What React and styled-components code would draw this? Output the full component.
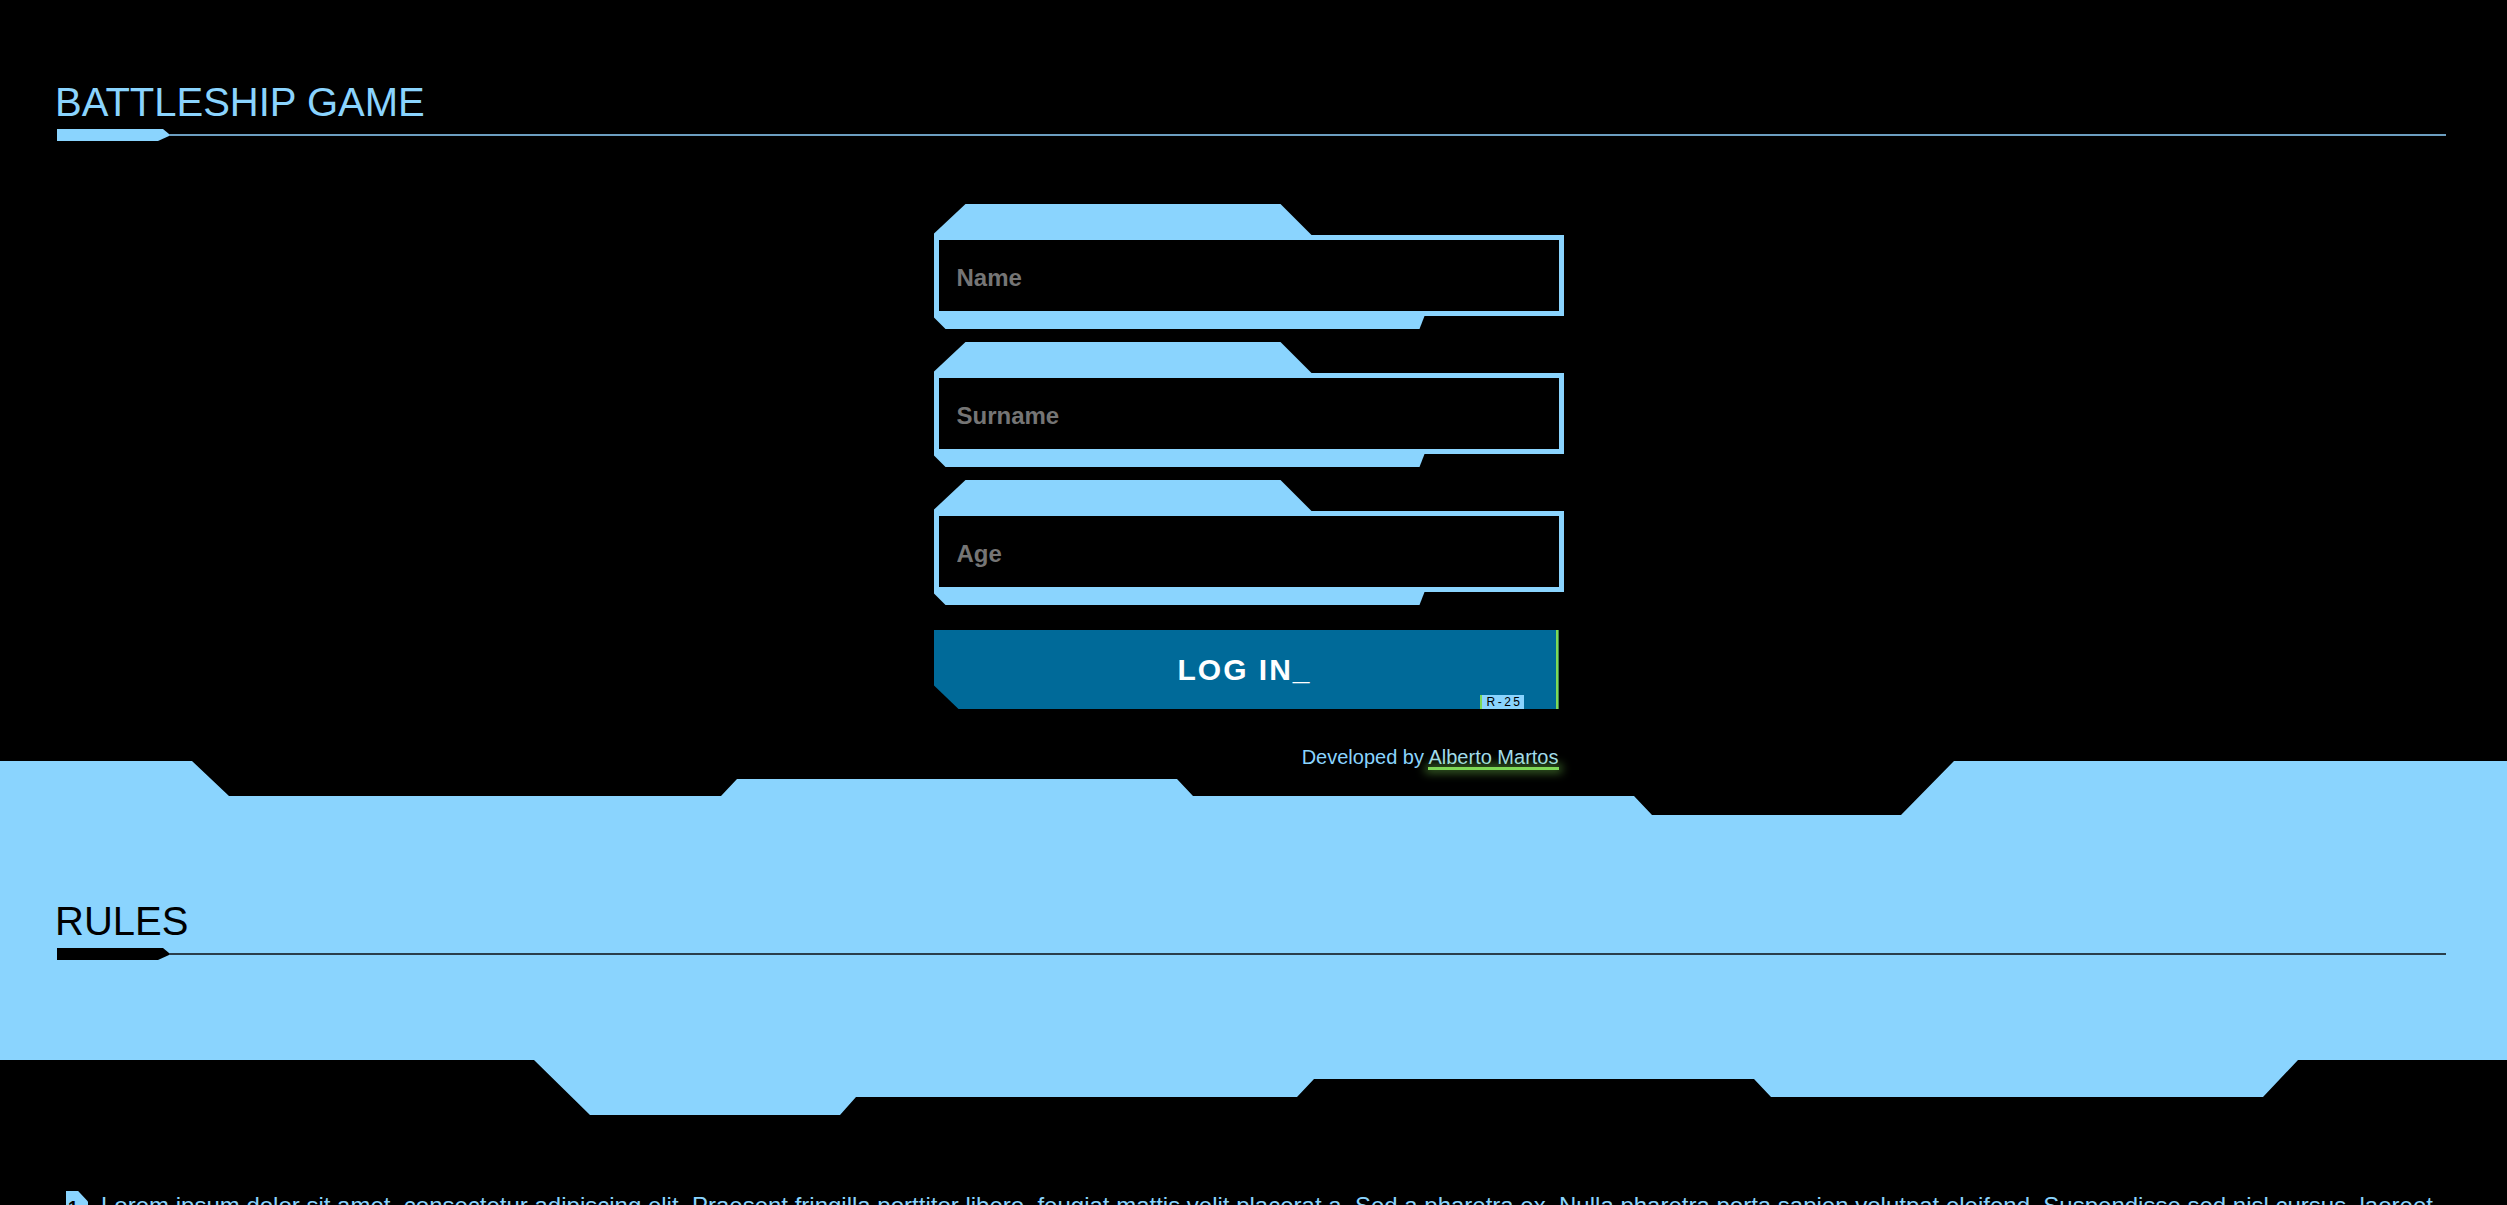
import React from 'react'
import styled, { createGlobalStyle } from 'styled-components'

const sky = '#8ad4fe'
const lime = '#7ed957'

const GlobalStyle = createGlobalStyle`
  html, body {
    margin: 0;
    padding: 0;
    background: #000;
  }
  body {
    font-family: "Liberation Sans", Arial, sans-serif;
    overflow: hidden;
  }
`

function Heading({ children, dark }) {
  return (
    <HeadingWrap>
      <Title dark={dark}>{children}</Title>
      <RuleRow>
        <RuleTab dark={dark} />
        <RuleLine dark={dark} />
      </RuleRow>
    </HeadingWrap>
  )
}

function Field({ placeholder }) {
  return (
    <FieldWrap>
      <TopTab />
      <Input placeholder={placeholder} />
      <BottomTab />
    </FieldWrap>
  )
}

export default function App() {
  return (
    <Page>
      <GlobalStyle />
      <Header>
        <Heading>BATTLESHIP GAME</Heading>
      </Header>

      <FormArea>
        <Form onSubmit={(e) => e.preventDefault()}>
          <Field placeholder="Name" />
          <Field placeholder="Surname" />
          <Field placeholder="Age" />
          <LoginButton type="submit">
            LOG IN_
            <Tag>R-25</Tag>
          </LoginButton>
          <Credit>
            Developed by <CreditLink href="#">Alberto Martos</CreditLink>
          </Credit>
        </Form>
      </FormArea>

      <Band>
        <Heading dark>RULES</Heading>
      </Band>

      <RulesList>
        <RuleItem>
          <Marker>1</Marker>
          <RuleText>
            Lorem ipsum dolor sit amet, consectetur adipiscing elit. Praesent fringilla porttitor libero, feugiat mattis velit placerat a. Sed a pharetra ex. Nulla pharetra porta sapien volutpat eleifend. Suspendisse sed nisl cursus, laoreet nunc at, tincidunt nibh. Morbi vitae ante et lacus fermentum dictum.
          </RuleText>
        </RuleItem>
      </RulesList>
    </Page>
  )
}

const Page = styled.div`
  width: 100%;
  min-height: 100vh;
  background: #000;
`

const Header = styled.header`
  padding: 79px 61px 0 57px;
`

const HeadingWrap = styled.div`
  display: flex;
  flex-direction: column;
  gap: 4px;
`

const Title = styled.h1`
  margin: 0 0 0 -2px;
  font-size: 40px;
  line-height: 46px;
  font-weight: normal;
  color: ${(p) => (p.dark ? '#000' : sky)};
`

const RuleRow = styled.div`
  display: flex;
  align-items: center;
  height: 12px;
`

const RuleTab = styled.div`
  width: 112px;
  height: 12px;
  background: ${(p) => (p.dark ? '#000' : sky)};
  clip-path: polygon(0 0, 106px 0, 112px 5px, 112px 7px, 101px 12px, 0 12px);
`

const RuleLine = styled.div`
  flex: 1;
  height: 2px;
  background: ${(p) => (p.dark ? '#2a3e4b' : '#6c9ec0')};
`

const FormArea = styled.main`
  display: flex;
  justify-content: center;
  margin-top: 63px;
`

const Form = styled.form`
  width: 640px;
  display: flex;
  flex-direction: column;
`

const FieldWrap = styled.div`
  display: flex;
  flex-direction: column;
  width: 630px;
  margin-bottom: 13px;
`

const TopTab = styled.div`
  width: 378px;
  height: 31px;
  background: ${sky};
  clip-path: polygon(0 30px, 32px 0, 347px 0, 100% 100%, 0 100%);
`

const Input = styled.input`
  box-sizing: border-box;
  width: 630px;
  height: 81px;
  border: 5px solid ${sky};
  background: #000;
  color: #fff;
  padding: 5px 18px 0;
  font-family: "Liberation Sans", Arial, sans-serif;
  font-size: 24px;
  font-weight: bold;
  outline: none;

  &::placeholder {
    color: #757575;
  }
`

const BottomTab = styled.div`
  width: 491px;
  height: 13px;
  background: ${sky};
  clip-path: polygon(0 0, 100% 0, calc(100% - 5px) 100%, 12px 100%, 0 1px);
`

const LoginButton = styled.button`
  position: relative;
  box-sizing: border-box;
  width: 625px;
  height: 79px;
  margin-top: 12px;
  border: none;
  border-right: 3px solid ${lime};
  background: #006a99;
  color: #fff;
  font-family: "Liberation Sans", Arial, sans-serif;
  font-size: 30px;
  font-weight: bold;
  letter-spacing: 2px;
  cursor: pointer;
  clip-path: polygon(0 0, 100% 0, 100% 100%, 25px 100%, 0 55px);
`

const Tag = styled.span`
  position: absolute;
  right: 32px;
  bottom: 0;
  box-sizing: border-box;
  width: 44px;
  height: 14px;
  padding-left: 5px;
  background: ${sky};
  border-left: 2px solid ${lime};
  color: #000;
  font-size: 12px;
  font-weight: normal;
  line-height: 15px;
  letter-spacing: 2.5px;
  text-align: left;
`

const Credit = styled.p`
  width: 625px;
  margin: 37px 0 0;
  text-align: right;
  font-size: 20px;
  line-height: 23px;
  color: ${sky};
`

const CreditLink = styled.a`
  position: relative;
  color: #a3dcec;
  text-decoration: none;

  &::after {
    content: '';
    position: absolute;
    left: 0;
    right: 0;
    bottom: -2px;
    height: 3px;
    background: ${lime};
    box-shadow: 0 0 10px 3px rgba(126, 217, 87, 0.45);
  }
`

const Band = styled.section`
  margin-top: -8px;
  height: 354px;
  box-sizing: border-box;
  padding: 137px 61px 0 57px;
  background: ${sky};
  clip-path: polygon(
    0 0, 192px 0, 229px 35px, 721px 35px, 737px 18px, 1177px 18px,
    1193px 35px, 1634px 35px, 1652px 54px, 1901px 54px, 1954px 0, 100% 0,
    100% 299px, 2298px 299px, 2263px 336px, 1771px 336px, 1754px 318px,
    1314px 318px, 1297px 336px, 856px 336px, 840px 354px, 590px 354px,
    534px 299px, 0 299px
  );
`

const RulesList = styled.ol`
  list-style: none;
  margin: 77px 61px 0 57px;
  padding: 0 0 0 9px;
`

const RuleItem = styled.li`
  display: flex;
  align-items: flex-start;
  gap: 13px;
`

const Marker = styled.span`
  flex: none;
  display: flex;
  align-items: flex-end;
  width: 22px;
  height: 26px;
  margin-top: -1px;
  padding-left: 2px;
  box-sizing: border-box;
  background: ${sky};
  color: #000;
  font-size: 18px;
  font-weight: bold;
  line-height: 18px;
  clip-path: polygon(0 0, 55% 0, 100% 40%, 100% 100%, 0 100%);
`

const RuleText = styled.p`
  margin: 0;
  font-size: 24px;
  line-height: 28px;
  color: ${sky};
`
